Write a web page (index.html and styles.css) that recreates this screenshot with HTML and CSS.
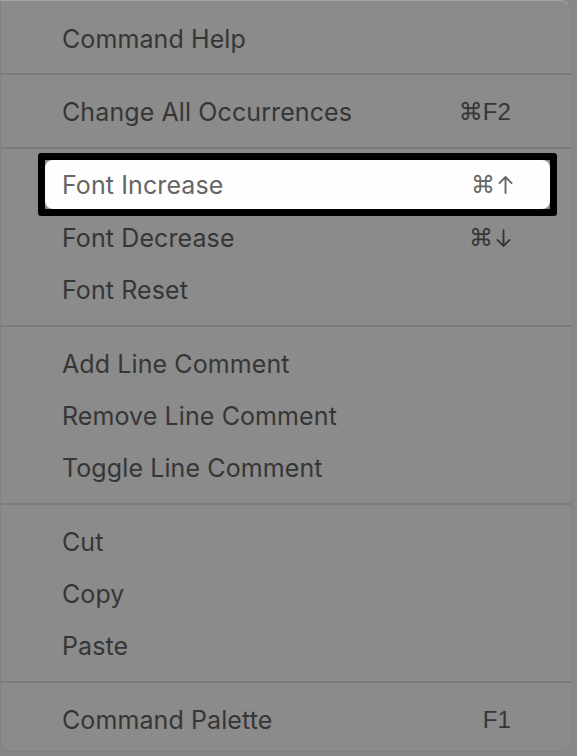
FILE: index.html
```html
<!DOCTYPE html>
<html>
<head>
<meta charset="utf-8">
<link rel="stylesheet" href="styles.css">
</head>
<body>
<div class="menu">
  <div class="section first">
    <div class="item"><span class="label">Command Help</span></div>
  </div>
  <div class="section">
    <div class="item"><span class="label">Change All Occurrences</span><span class="key">⌘F2</span></div>
  </div>
  <div class="section">
    <div class="item active">
      <div class="frame">
        <div class="hl"><span class="label">Font Increase</span><span class="key">⌘<svg class="arrow" viewBox="0 0 16 20" aria-label="↑"><path d="M8 19V2M1.5 8.5L8 2l6.5 6.5" fill="none" stroke="currentColor" stroke-width="2" stroke-linecap="round" stroke-linejoin="round"/></svg></span></div>
      </div>
    </div>
    <div class="item"><span class="label">Font Decrease</span><span class="key">⌘<svg class="arrow" viewBox="0 0 16 20" aria-label="↓"><path d="M8 1v17M1.5 11.5L8 18l6.5-6.5" fill="none" stroke="currentColor" stroke-width="2" stroke-linecap="round" stroke-linejoin="round"/></svg></span></div>
    <div class="item"><span class="label">Font Reset</span></div>
  </div>
  <div class="section">
    <div class="item"><span class="label">Add Line Comment</span></div>
    <div class="item"><span class="label">Remove Line Comment</span></div>
    <div class="item"><span class="label">Toggle Line Comment</span></div>
  </div>
  <div class="section">
    <div class="item"><span class="label">Cut</span></div>
    <div class="item"><span class="label">Copy</span></div>
    <div class="item"><span class="label">Paste</span></div>
  </div>
  <div class="section last">
    <div class="item"><span class="label">Command Palette</span><span class="key">F1</span></div>
  </div>
</div>
</body>
</html>
```
FILE: styles.css
```css
html, body {
  margin: 0;
  padding: 0;
  background: #878787;
}
body {
  width: 577px;
  height: 756px;
  overflow: hidden;
  font-family: Inter, "Liberation Sans", sans-serif;
}
.menu {
  width: 572px;
  height: 752px;
  box-sizing: border-box;
  background: #8b8b8b;
  border-top: 1px solid #a6a6a6;
  border-left: 1px solid #828282;
  border-right: 1px solid #838383;
  border-bottom: 1px solid #838383;
  border-radius: 0 12px 12px 12px;
  display: flex;
  flex-direction: column;
}
.section {
  padding: 11px 0 9px;
  border-bottom: 2px solid #7b7b7b;
}
.section.first {
  padding-top: 12px;
  padding-bottom: 8px;
}
.section.last {
  border-bottom: none;
}
.item {
  height: 52px;
  display: flex;
  align-items: center;
  justify-content: space-between;
  padding: 0 60px 0 61px;
  font-size: 25px;
  color: #363636;
  letter-spacing: 0.1px;
}
.key {
  font-family: "Liberation Sans", "DejaVu Sans", sans-serif;
  font-size: 24px;
  display: flex;
  align-items: center;
  gap: 3px;
}
.arrow {
  width: 15px;
  height: 19px;
}
.item.active {
  padding: 0;
  position: relative;
}
.frame {
  position: absolute;
  left: 37px;
  top: -7px;
  width: 519px;
  height: 63px;
  box-sizing: border-box;
  border: 7px solid #000;
  border-radius: 3px;
  display: flex;
}
.hl {
  flex: 1;
  background: #fefefe;
  border-radius: 8px;
  display: flex;
  align-items: center;
  justify-content: space-between;
  padding: 0 37px 0 17px;
  color: #666;
}
```
